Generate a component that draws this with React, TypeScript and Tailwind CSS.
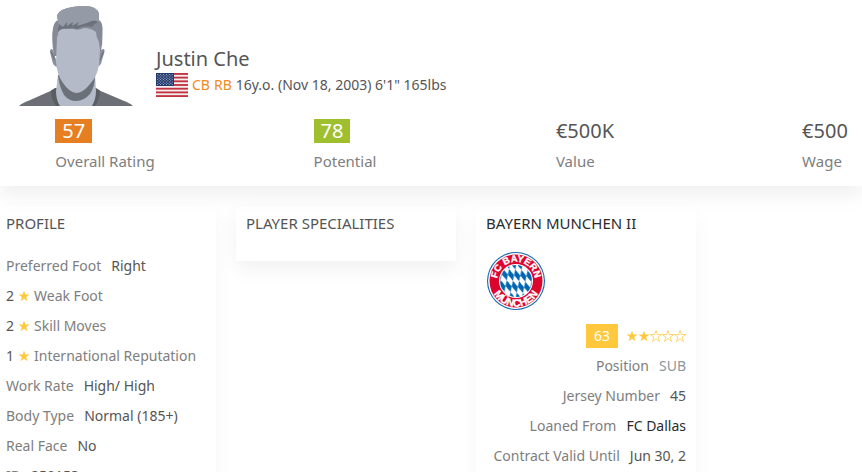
import React from 'react';

const stats = [
    { label: 'Overall Rating', value: '57', color: 'bg-[#e67e22]' },
    { label: 'Potential', value: '78', color: 'bg-[#9fbf2f]' },
    { label: 'Value', value: '€500K', color: '' },
    { label: 'Wage', value: '€500', color: '' },
];

const ratings = [
    { value: 2, label: 'Weak Foot' },
    { value: 2, label: 'Skill Moves' },
    { value: 1, label: 'International Reputation' },
];

const details = [
    { label: 'Work Rate', value: 'High/ High' },
    { label: 'Body Type', value: 'Normal (185+)' },
    { label: 'Real Face', value: 'No' },
    { label: 'ID', value: '259153' },
];

const Star = ({ filled = true }: { filled?: boolean }) => (
    <svg viewBox="0 0 12 12" className="size-3 shrink-0" aria-hidden="true">
        <path
            d="M6 .6 7.300 4.500 11.600 4.550 8.150 7.100 9.450 11.300 6 8.700 2.550 11.300 3.850 7.100 .4 4.550 4.700 4.500Z"
            fill={filled ? '#ffc83d' : 'none'}
            stroke="#ffc83d"
            strokeWidth={filled ? 0 : 0.75}
        />
    </svg>
);

const Avatar = () => (
    <svg viewBox="0 0 120 106" className="h-[106px] w-[120px]" role="img" aria-label="Justin Che">
        <path d="M3 106 Q6 103 13 100.500 L39 89 L80 89 L107 100.500 Q114 103 117 106Z" fill="#6c6f76" />
        <path d="M39 88 L35 90.500 Q35 99 40 106 H79 Q84 99 84 90.500 L80 88Z" fill="#5a5d64" />
        <path d="M42 75 L40 91 Q40 100 44 106 H76 Q80 99 80 91 L79 75Z" fill="#b4bac7" />
        <path d="M42 75 Q43 86 48 95 Q53 101 60 101 Q68 101 74 94 Q79 86 79 76Z" fill="#6c7079" />
        <path d="M37 50 Q34 47 34 52 L36 60 Q37 67 42 67Z" fill="#8b909d" />
        <path d="M85 50 Q89 47 88.500 52 L86 60 Q85 67 80 67Z" fill="#8b909d" />
        <path d="M35 51.500 L39 60M87.500 51.500 L84 60" stroke="#686c76" strokeWidth="1" />
        <path d="M38 56 Q35 38 37 28 Q38 22 42 20 Q39 14 46 10 Q55 6 69 6 Q81 6 83 14 V20 Q87 22 86.500 32 Q87 44 84 56Z" fill="#858a96" />
        <path d="M42 20 Q39 14 46 10 Q55 6 69 6 Q81 6 83 14 V22 Q78 18 70 24 Q60 26 50 26 L43 28Z" fill="#959aa7" />
        <path d="M42 30 L43 24 L47 27 L51 22 L51 26 L57 22 L56 26 L63 22 L61 26 L71 23 Q79 19 82 22 Q79 23 76 27 Q68 25 61 29 Q51 26 43 33Z" fill="#6e727d" />
        <path d="M41 37 Q43 35 42 33 Q44 28 51 29 L58 29 Q62 31 68 28 Q75 28 80 32 Q80 37 83 42 L84 50 L83 65 Q81 77 74 84 Q67 93 60 93 Q53 92 47 83 Q41 75 40 62Z" fill="#b4bac7" />
    </svg>
);

const Flag = () => (
    <svg viewBox="0 0 32 24" className="h-6 w-8" role="img" aria-label="United States">
        <rect width="32" height="24" fill="#f4f0f2" />
        {[0, 1, 2, 3, 4, 5, 6].map((i) => (
            <rect key={i} y={(i * 48) / 13} width="32" height={24 / 13} fill="#c2323f" />
        ))}
        <rect width="18" height="13" fill="#243a6c" />
        {[0, 1, 2, 3, 4].map((row) =>
            [0, 1, 2, 3, 4, 5].map((col) => (
                <circle key={`${row}-${col}`} cx={1.7 + col * 2.9} cy={1.5 + row * 2.5} r="0.6" fill="#a9b6d2" />
            ))
        )}
        {[0, 1, 2, 3].map((row) =>
            [0, 1, 2, 3, 4].map((col) => (
                <circle key={`${row}-${col}`} cx={3.15 + col * 2.9} cy={2.75 + row * 2.5} r="0.6" fill="#a9b6d2" />
            ))
        )}
    </svg>
);

const ClubLogo = () => (
    <svg viewBox="0 0 60 60" className="size-[60px]" role="img" aria-label="Bayern Munchen">
        <defs>
            <path id="topArc" d="M11.400 33 A18.900 18.900 0 1 1 48.600 33" />
            <path id="bottomArc" d="M4.700 28 A25.400 25.400 0 1 0 55.300 28" />
            <pattern id="lozenges" width="6.200" height="11.500" patternUnits="userSpaceOnUse" patternTransform="translate(30 30) rotate(4) skewX(22)">
                <path d="M3.100 0 L6.200 5.750 L3.100 11.500 L0 5.750Z" fill="#0066b2" />
            </pattern>
        </defs>
        <circle cx="30" cy="30" r="29" fill="#0f68b0" />
        <circle cx="30" cy="30" r="27.900" fill="#fff" />
        <circle cx="30" cy="30" r="26.500" fill="#dc052d" />
        <circle cx="30" cy="30" r="17" fill="#fff" />
        <circle cx="30" cy="30" r="16" fill="url(#lozenges)" />
        <g fill="#fff" stroke="#fff" strokeWidth="0.300" fontFamily="Liberation Sans, sans-serif" fontWeight="700" fontSize="9.500" textAnchor="middle">
            <text>
                <textPath href="#topArc" startOffset="50%">FC BAYERN</textPath>
            </text>
            <text fontSize="10.500">
                <textPath href="#bottomArc" startOffset="50%">MÜNCHEN</textPath>
            </text>
        </g>
    </svg>
);

const App = () => {
    return (
        <div className="h-screen overflow-hidden bg-white font-['Noto_Sans',sans-serif] text-sm leading-[30px] text-[#555]">
            {/* Player header */}
            <header className="h-[186px] shadow-[0_8px_20px_rgba(0,0,0,0.07)]">
                <div className="flex pl-4">
                    <Avatar />
                    <div className="pt-[45px] pl-5">
                        <h1 className="text-xl leading-7">Justin Che</h1>
                        <div className="flex items-center gap-1 leading-6">
                            <Flag />
                            <a href="#cb" className="text-[#ee8a22]">CB</a>
                            <a href="#rb" className="text-[#ee8a22]">RB</a>
                            <span>16y.o. (Nov 18, 2003) 6&apos;1&quot; 165lbs</span>
                        </div>
                    </div>
                </div>
                <div className="overflow-hidden pt-[13px]">
                    <div className="-mr-[83px] -ml-[15px] grid grid-cols-4 justify-items-center">
                        {stats.map((stat) => (
                            <div key={stat.label}>
                                <div className="flex text-xl leading-6">
                                    <span className={stat.color ? `px-[7px] text-white ${stat.color}` : ''}>{stat.value}</span>
                                </div>
                                <div className="pt-[3px] text-[15px] text-[#7e7e7e]">{stat.label}</div>
                            </div>
                        ))}
                    </div>
                </div>
            </header>

            <main className="flex items-start gap-5 pt-5">
                {/* Profile */}
                <section className="w-[216px] shrink-0 pb-3 pl-1.5 whitespace-nowrap shadow-[0_8px_20px_rgba(0,0,0,0.04)]">
                    <h2 className="pt-0.5 pb-[13px] text-[15px]">PROFILE</h2>
                    <ul>
                        <li className="flex gap-2.5">
                            <span className="text-[#7e7e7e]">Preferred Foot</span>Right
                        </li>
                        {ratings.map((item) => (
                            <li key={item.label} className="flex items-center gap-1">
                                {item.value}
                                <Star />
                                <span className="text-[#7e7e7e]">{item.label}</span>
                            </li>
                        ))}
                        {details.map((item) => (
                            <li key={item.label} className="flex gap-2.5">
                                <span className="text-[#7e7e7e]">{item.label}</span>{item.value}
                            </li>
                        ))}
                    </ul>
                </section>

                {/* Specialities */}
                <section className="h-[55px] w-[220px] shrink-0 px-2.5 shadow-[0_8px_20px_rgba(0,0,0,0.06)]">
                    <h2 className="pt-0.5 text-[15px]">PLAYER SPECIALITIES</h2>
                </section>

                {/* Club */}
                <section className="w-[220px] shrink-0 px-2.5 pb-10 whitespace-nowrap shadow-[0_8px_20px_rgba(0,0,0,0.04)]">
                    <h2 className="pt-0.5 pb-[13px] text-[15px]"><a href="#club" className="text-[#2b2b2b]">BAYERN MUNCHEN II</a></h2>
                    <ClubLogo />
                    <div className="flex flex-col items-end pt-2.5">
                        <div className="flex h-[30px] items-center gap-2">
                            <span className="bg-[#ffc83d] px-2 leading-6 text-white">63</span>
                            <span className="flex">
                                {[1, 2, 3, 4, 5].map((n) => <Star key={n} filled={n <= 2} />)}
                            </span>
                        </div>
                        <div className="flex gap-2.5"><span className="text-[#7e7e7e]">Position</span><span className="text-[#8a979f]">SUB</span></div>
                        <div className="flex gap-2.5"><span className="text-[#7e7e7e]">Jersey Number</span>45</div>
                        <div className="flex gap-2.5"><span className="text-[#7e7e7e]">Loaned From</span><a href="#dallas" className="text-[#2b2b2b]">FC Dallas</a></div>
                        <div className="flex gap-2.5"><span className="text-[#7e7e7e]">Contract Valid Until</span>Jun 30, 2</div>
                    </div>
                </section>
            </main>
        </div>
    );
};

export default App;
